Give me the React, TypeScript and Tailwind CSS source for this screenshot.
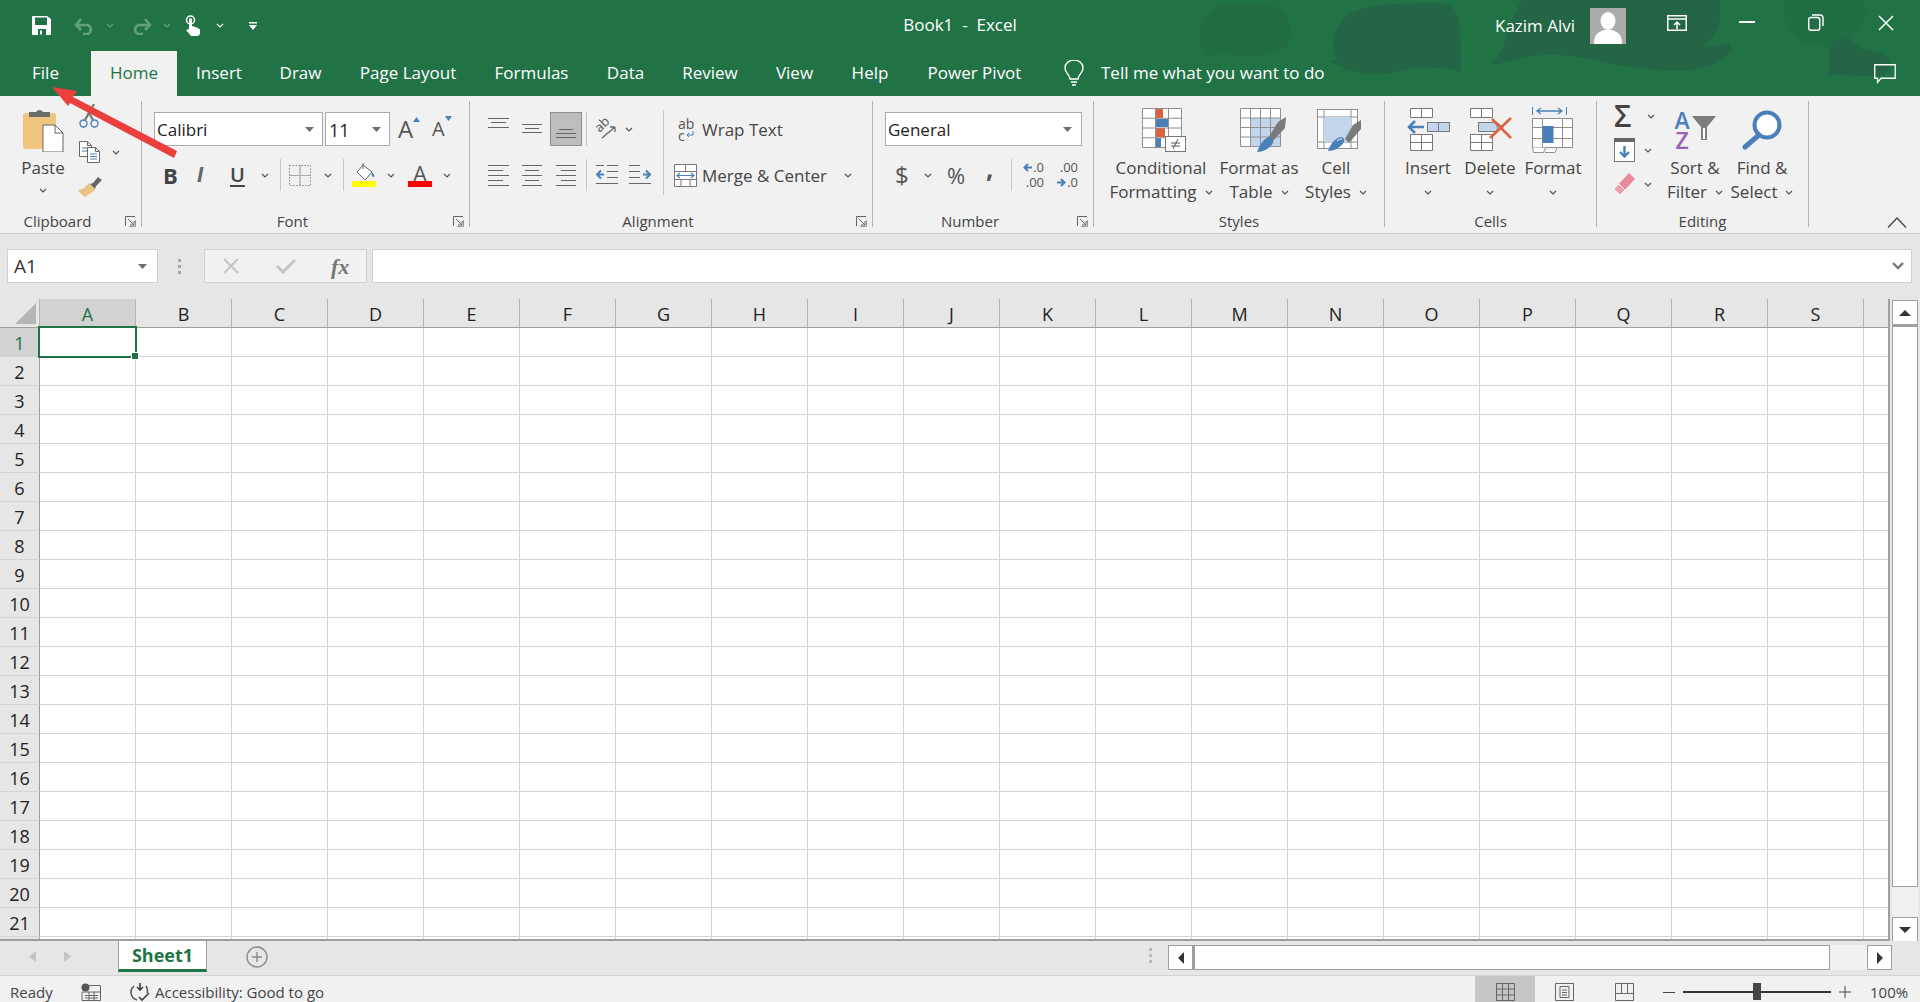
import type { ReactNode } from 'react'

const columns = 'ABCDEFGHIJKLMNOPQRS'.split('')
const rows = Array.from({ length: 22 }, (_, i) => i + 1)
const tabs = [
  { label: 'File', w: 'w-[91px]' },
  { label: 'Home', w: 'w-[86px]', active: true },
  { label: 'Insert', w: 'w-[84px]' },
  { label: 'Draw', w: 'w-[79px]' },
  { label: 'Page Layout', w: 'w-[136px]' },
  { label: 'Formulas', w: 'w-[111px]' },
  { label: 'Data', w: 'w-[77px]' },
  { label: 'Review', w: 'w-[92px]' },
  { label: 'View', w: 'w-[77px]' },
  { label: 'Help', w: 'w-[74px]' },
  { label: 'Power Pivot', w: 'w-[135px]' },
]

function Chev({ className = '', color = '#555' }: { className?: string; color?: string }) {
  return (
    <svg viewBox="0 0 8 5" className={`h-[5px] w-[8px] shrink-0 ${className}`}>
      <path d="M1 1l3 3 3-3" fill="none" stroke={color} strokeWidth="1.2" />
    </svg>
  )
}

function Caret({ className = '' }: { className?: string }) {
  return (
    <svg viewBox="0 0 9 5" className={`h-[5px] w-[9px] shrink-0 ${className}`}>
      <path d="M0 0h9L4.5 5z" fill="#6f6f6f" />
    </svg>
  )
}

function Launcher() {
  return (
    <svg viewBox="0 0 11 11" className="ml-[10px] h-[11px] w-[11px]">
      <path d="M.5 10V.5H10M3 3l6 6M9 5v4H5" fill="none" stroke="#666" strokeWidth="1" />
      <path d="M10.5 4v6.5H4" fill="none" stroke="#999" strokeWidth="1" />
    </svg>
  )
}

function Lines({ w, h, items }: { w: number; h: number; items: [number, number, number][] }) {
  return (
    <svg viewBox={`0 0 ${w} ${h}`} width={w} height={h} className="shrink-0">
      {items.map(([x1, x2, y], i) => (
        <path key={i} d={`M${x1} ${y + 0.5}H${x2}`} stroke="#666" strokeWidth="1" />
      ))}
    </svg>
  )
}

function Group({ className, label, launcher, children }: { className: string; label: string; launcher?: boolean; children: ReactNode }) {
  return (
    <div className={`flex h-[126px] shrink-0 flex-col border-r border-[#b4b4b4] ${className}`}>
      <div className="min-h-0 flex-1">{children}</div>
      <div className="mb-[-4px] flex h-[20px] items-center text-[15px] leading-[20px] text-[#444]">
        <div className="flex-1 text-center">{label}</div>
        {launcher && <div className="flex w-[26px] items-center"><Launcher /></div>}
      </div>
    </div>
  )
}

function BigButton({ className, icon, first, second }: { className: string; icon: ReactNode; first: string; second?: string }) {
  return (
    <div className={`flex shrink-0 flex-col items-center ${className}`}>
      <div className="flex h-[55px] w-full items-center justify-center pt-[2px]">{icon}</div>
      <div className="h-[24px] whitespace-nowrap leading-[24px]">{first}</div>
      <div className="flex h-[24px] items-center whitespace-nowrap leading-[24px]">
        {second}
        <Chev className={second ? 'ml-[8px]' : ''} />
      </div>
    </div>
  )
}

function PasteIcon() {
  return (
    <svg viewBox="0 0 41 45" className="h-[45px] w-[41px]">
      <rect x="0" y="6" width="33" height="36" rx="2" fill="#eec680" />
      <path d="M6 10V5h7a4 4 0 0 1 7 0h7v5z" fill="#6d6d6d" />
      <path d="M20 18h12l8 8v19H20z" fill="#fff" stroke="#666" strokeWidth="1" />
      <path d="M32 18v8h8" fill="none" stroke="#666" strokeWidth="1" />
    </svg>
  )
}

function CutIcon() {
  return (
    <svg viewBox="0 0 20 24" className="h-[24px] w-[20px]">
      <path d="M5 0l9 16M15 0L6 16" stroke="#777" strokeWidth="2.200" fill="none" />
      <circle cx="4.500" cy="19.500" r="3.500" fill="none" stroke="#4a80b9" strokeWidth="1.400" />
      <circle cx="15.500" cy="19.500" r="3.500" fill="none" stroke="#4a80b9" strokeWidth="1.400" />
    </svg>
  )
}

function CopyIcon() {
  return (
    <svg viewBox="0 0 21 22" className="h-[22px] w-[21px]">
      <path d="M.5.5h8l4 4v11H.5z" fill="#fff" stroke="#666" />
      <path d="M8.5.5v4h4" fill="none" stroke="#666" />
      <path d="M3 7h7M3 10h7" stroke="#4a80b9" />
      <path d="M8.5 6.5h8l4 4v11h-12z" fill="#fff" stroke="#666" />
      <path d="M16.5 6.5v4h4" fill="none" stroke="#666" />
      <path d="M11 13h7M11 15.500h7M11 18h7" stroke="#4a80b9" />
    </svg>
  )
}

function BrushIcon() {
  return (
    <svg viewBox="0 0 24 20" className="h-[20px] w-[24px]">
      <path d="M15 6l5-6 4 3-6 6 -1 3-5-5z" fill="#666" />
      <path d="M11 6l6 7-4 3c-2 1-4 3-6 4-2-1-5-4-7-7 4 0 8-3 11-7z" fill="#e9c384" />
    </svg>
  )
}

function CellGrid({ cols, rowsCount, x, y, w, h }: { cols: number; rowsCount: number; x: number; y: number; w: number; h: number }) {
  const v = Array.from({ length: cols + 1 }, (_, i) => x + (i * w) / cols)
  const r = Array.from({ length: rowsCount + 1 }, (_, i) => y + (i * h) / rowsCount)
  return (
    <>
      {v.map((p) => <path key={`v${p}`} d={`M${p} ${y}V${y + h}`} stroke="#8f8f8f" strokeWidth="1" />)}
      {r.map((p) => <path key={`r${p}`} d={`M${x} ${p}H${x + w}`} stroke="#8f8f8f" strokeWidth="1" />)}
    </>
  )
}

function ConditionalIcon() {
  return (
    <svg viewBox="0 0 44 44" className="ml-[5px] h-[44px] w-[44px]">
      <rect x=".5" y=".5" width="39" height="39" fill="#fff" />
      <rect x="13" y="1" width="8" height="9" fill="#dc6141" />
      <rect x="13" y="11" width="13" height="8" fill="#4a80b9" />
      <rect x="13" y="20" width="10" height="9" fill="#dc6141" />
      <rect x="13" y="30" width="6" height="9" fill="#4a80b9" />
      <CellGrid cols={3} rowsCount={4} x={0.5} y={0.5} w={39} h={39} />
      <rect x="23.500" y="28.500" width="20" height="15" fill="#fff" stroke="#777" />
      <path d="M29 35h9M29 38h9M31 41l5-10" stroke="#555" fill="none" />
    </svg>
  )
}

function TableIcon() {
  return (
    <svg viewBox="0 0 46 44" className="ml-[7px] h-[44px] w-[46px]">
      <rect x=".5" y=".5" width="40" height="38" fill="#fff" />
      <rect x="10" y="10" width="30" height="28" fill="#c3d5ea" />
      <CellGrid cols={4} rowsCount={4} x={0.5} y={0.5} w={40} h={38} />
      <path d="M38 14l8-5-1 11-13 14-4-4z" fill="#7a7a7a" />
      <path d="M17 44c2-6 6-13 12-15 3 0 5 3 4 6-3 5-9 9-16 9z" fill="#4a80b9" />
    </svg>
  )
}

function CellStyleIcon() {
  return (
    <svg viewBox="0 0 44 42" className="ml-[6px] h-[42px] w-[44px]">
      <rect x=".5" y=".5" width="40" height="39" fill="#fff" stroke="#8f8f8f" />
      <path d="M.5 8h40M.5 33h40M7 .5v39M34 .5v39" stroke="#8f8f8f" fill="none" />
      <rect x="7" y="8" width="27" height="25" fill="#c3d5ea" />
      <path d="M36 16l8-5v9L32 34l-4-4z" fill="#7a7a7a" />
      <path d="M11 42c2-6 6-12 12-14 3 0 5 2 4 5-3 5-9 9-16 9z" fill="#4a80b9" />
      <path d="M20 32c2-2 3-2 5-2" stroke="#fff" fill="none" />
    </svg>
  )
}

function InsertIcon() {
  return (
    <svg viewBox="0 0 43 43" className="h-[43px] w-[43px]">
      <path d="M3.500.5h22v9h-22zM14.500.5v9M3.500 26.500h22v16h-22zM14.500 26.500v16M3.500 34.500h22" fill="#fff" stroke="#777" />
      <rect x="20.500" y="14.500" width="22" height="9" fill="#c3d5ea" stroke="#777" />
      <path d="M31.500 14.500v9" stroke="#777" />
      <path d="M17 19H3M8 13l-6 6 6 6" fill="none" stroke="#4a80b9" strokeWidth="2.600" />
    </svg>
  )
}

function DeleteIcon() {
  return (
    <svg viewBox="0 0 43 43" className="ml-[2px] h-[43px] w-[43px]">
      <path d="M.5.5h22v9H.5zM11.500.5v9M.5 26.500h22v16H.5zM11.500 26.500v16M.5 34.500h22" fill="#fff" stroke="#777" />
      <rect x="8.500" y="14.500" width="18" height="9" fill="#c3d5ea" stroke="#777" />
      <path d="M26 13l8 6-8 6z" fill="#9bb8d8" />
      <path d="M22 11l19 19M41 10L20 30" stroke="#dc6141" strokeWidth="2.600" />
    </svg>
  )
}

function FormatIcon() {
  return (
    <svg viewBox="0 0 42 46" className="h-[46px] w-[42px]">
      <path d="M.5 0v8M34.500 0v8" stroke="#4a80b9" />
      <path d="M5 4h25M9 1L5 4l4 3M26 1l4 3-4 3" fill="none" stroke="#4a80b9" strokeWidth="1.300" />
      <rect x=".5" y="11.500" width="40" height="29" fill="#fff" stroke="#8f8f8f" />
      <path d="M.5 40.500l1 5h10l2-5M25 40.500l-2 5h-10" fill="#fff" stroke="#8f8f8f" />
      <path d="M10.500 11.500v29M30.500 11.500v29M.5 20.500h40M.5 31.500h40" stroke="#8f8f8f" fill="none" />
      <rect x="10.500" y="19" width="11" height="17" fill="#4a80b9" />
    </svg>
  )
}

function SortIcon() {
  return (
    <div className="ml-[2px] flex h-[40px] w-[43px] items-center">
      <div className="flex flex-col items-center text-[23px] font-semibold">
        <span className="h-[20px] leading-[20px] text-[#4a80b9]">A</span>
        <span className="h-[20px] leading-[20px] text-[#9a5fb7]">Z</span>
      </div>
      <svg viewBox="0 0 24 24" className="ml-[2px] mt-[-4px] h-[24px] w-[24px] shrink-0">
        <path d="M0 0h24L15 11v13H9V11z" fill="#7d7d7d" />
        <path d="M11 12h2v11h-2z" fill="#fff" />
      </svg>
    </div>
  )
}

function FindIcon() {
  return (
    <svg viewBox="0 0 41 41" className="h-[41px] w-[41px]">
      <circle cx="25" cy="16" r="12.500" fill="#fff" stroke="#4a80b9" strokeWidth="4" />
      <path d="M17 26L3 38" stroke="#4a80b9" strokeWidth="5" strokeLinecap="round" />
    </svg>
  )
}

function DecimalIcon({ more }: { more?: boolean }) {
  const arrow = (
    <svg viewBox="0 0 9 9" className="h-[9px] w-[9px]">
      {more
        ? <path d="M0 4.500h7M4 1l3.500 3.500L4 8" fill="none" stroke="#4a80b9" strokeWidth="2" />
        : <path d="M9 4.500H2M5 1L1.500 4.500 5 8" fill="none" stroke="#4a80b9" strokeWidth="2" />}
    </svg>
  )
  return (
    <div className="flex h-[30px] w-[23px] flex-col text-[13px] leading-[15px] text-[#555]">
      {more ? (
        <>
          <div className="text-right">.00</div>
          <div className="flex items-center justify-end">{arrow}<span className="ml-[1px]">.0</span></div>
        </>
      ) : (
        <>
          <div className="flex items-center justify-end">{arrow}<span className="ml-[1px]">.0</span></div>
          <div className="text-right">.00</div>
        </>
      )}
    </div>
  )
}

function Header() {
  return (
    <header className="relative h-[96px] shrink-0 bg-[#217346] text-white">
      {/* office background swirls */}
      <svg viewBox="0 0 1920 96" className="absolute inset-0 h-full w-full">
        <path d="M1199 40c0-22 12-37 34-37h28c22 0 32 20 30 34-2 12-14 17-32 18-16 1-30-1-42-2l-13 6c2-6-3-11-5-19z" fill="#226c43" />
        <path d="M1345 17c12-10 34-14 90-14 16 0 23 8 24 18 2 16 2 34 2 51l-10-3c-10 0-26-3-38-1-14 4-30 7-44 6-14-1-30-7-39-13l-4-1 11 0c-6-14-3-30 8-43z" fill="#236544" />
        <path d="M1522 0h198v20c-2 10-8 20-16 27 8 1 18-3 26-4l2 7c-8 12-30 22-57 21-24-1-46-4-70-8-22-6-40-9-62-8-14 0-30 6-51 10 6-8 12-18 14-28 2-13 10-26 16-37z" fill="#236544" />
        <path d="M1784 0h80c6 14 0 30-16 40-14 8-30 8-44 2-14-8-24-24-20-42z" fill="#226e44" />
        <path d="M1826 75c6-6 4-10 3-18-1-10 5-19 14-19 9 0 13 7 19 11 10 2 24 4 28 12 1 4-2 10-6 14-12 1-30 1-42 0-6 0-10 0-16 0z" fill="#236544" />
      </svg>
      <div className="relative flex h-[51px] items-center">
        <div className="flex w-[480px] items-center">
          <svg viewBox="0 0 19 19" className="ml-[32px] h-[19px] w-[19px]">
            <path d="M1 0h14l4 3v15a1 1 0 0 1-1 1H1a1 1 0 0 1-1-1V1a1 1 0 0 1 1-1z" fill="#fff" />
            <path d="M3 1.500h12v7.500H3zM6 13h8v6H6z" fill="#217346" />
            <path d="M8 14.500h2v4H8z" fill="#fff" />
          </svg>
          <svg viewBox="0 0 21 18" className="ml-[23px] h-[18px] w-[21px]">
            <path d="M2 8h12a5 5 0 0 1 0 9H9M7 2L2 8l5 5" fill="none" stroke="#63a07f" strokeWidth="2.500" />
          </svg>
          <Chev className="ml-[11px]" color="#63a07f" />
          <svg viewBox="0 0 21 18" className="ml-[17px] h-[18px] w-[21px]">
            <path d="M19 8H7a5 5 0 0 0 0 9h5M14 2l5 6-5 5" fill="none" stroke="#63a07f" strokeWidth="2.500" />
          </svg>
          <Chev className="ml-[11px]" color="#63a07f" />
          <svg viewBox="0 0 15 21" className="ml-[14px] h-[21px] w-[15px]">
            <circle cx="5.500" cy="5" r="4" fill="none" stroke="#fff" strokeWidth="1.500" />
            <path d="M4 3.500h3V11l5 1.500 3 2V19l-2 2H6l-5-6 3-1z" fill="#fff" />
          </svg>
          <Chev className="ml-[16px]" color="#fff" />
          <svg viewBox="0 0 8 8" className="ml-[25px] h-[8px] w-[8px]">
            <path d="M0 0h8v1.500H0zM0 3h8L4 8z" fill="#fff" />
          </svg>
        </div>
        <div className="flex-1 pb-[2px] text-center text-[17px]">Book1&nbsp; - &nbsp;Excel</div>
        <div className="flex w-[480px] items-center">
          <div className="ml-[55px] w-[95px] whitespace-nowrap text-[17px]">Kazim Alvi</div>
          <svg viewBox="0 0 36 36" className="h-[36px] w-[36px]">
            <rect width="36" height="36" fill="#ababab" />
            <ellipse cx="18" cy="13" rx="7.500" ry="9" fill="#fff" />
            <path d="M4 36c0-10 4-12 10-14h8c6 2 10 4 10 14z" fill="#fff" />
          </svg>
          <svg viewBox="0 0 20 16" className="ml-[41px] mt-[-6px] h-[16px] w-[20px]">
            <path d="M.75.75h18.500v14.500H.75zM0 4h20M10 14V7M7 10l3-3 3 3" fill="none" stroke="#fff" strokeWidth="1.500" />
          </svg>
          <div className="ml-[52px] mt-[-7px] h-[2px] w-[16px] bg-white" />
          <svg viewBox="0 0 16 17" className="ml-[53px] mt-[-6px] h-[17px] w-[16px]">
            <rect x=".75" y="3.500" width="11" height="12.750" rx="2" fill="none" stroke="#fff" strokeWidth="1.400" />
            <path d="M4 1h8a3 3 0 0 1 3 3v8" fill="none" stroke="#fff" strokeWidth="1.400" />
          </svg>
          <svg viewBox="0 0 16 16" className="ml-[54px] mt-[-6px] h-[16px] w-[16px]">
            <path d="M1 1l14 14M15 1L1 15" stroke="#fff" strokeWidth="1.500" />
          </svg>
        </div>
      </div>
      <div className="relative flex h-[45px] items-stretch text-[17px]">
        {tabs.map((t) => (
          <div key={t.label} className={`${t.w} flex items-center justify-center pb-[1px] ${t.active ? 'bg-[#f1f1f1] text-[#217346]' : ''}`}>
            {t.label}
          </div>
        ))}
        <svg viewBox="0 0 20 27" className="ml-[22px] mt-[9px] h-[27px] w-[20px]">
          <path d="M6 19c0-4-5-6-5-11a9 8 0 0 1 18 0c0 5-5 7-5 11zM7 22h6M8 25h4" fill="none" stroke="#fff" strokeWidth="1.400" />
        </svg>
        <div className="ml-[17px] flex items-center whitespace-nowrap pb-[1px]">Tell me what you want to do</div>
        <svg viewBox="0 0 22 20" className="absolute left-[1874px] top-[13px] h-[20px] w-[22px]">
          <path d="M.75.75h20.500v13.500H7L3.500 18.500v-4.250H.75z" fill="none" stroke="#fff" strokeWidth="1.300" />
        </svg>
      </div>
    </header>
  )
}

function Ribbon() {
  return (
    <section className="flex h-[138px] shrink-0 border-b border-[#d0d0d0] bg-[#f1f1f1] pt-[5px] text-[17px] text-[#444]">
      <Group className="w-[142px]" label="Clipboard" launcher>
        <div className="flex">
          <div className="ml-[15px] flex w-[56px] flex-col items-center">
            <div className="mt-[6px]"><PasteIcon /></div>
            <div className="mt-[4px] h-[24px] leading-[24px]">Paste</div>
            <Chev className="mt-[8px]" />
          </div>
          <div className="ml-[8px] flex flex-col">
            <div className="mt-[3px]"><CutIcon /></div>
            <div className="mt-[13px] flex items-center">
              <CopyIcon />
              <Chev className="ml-[12px]" />
            </div>
            <div className="mt-[14px] ml-[-1px]"><BrushIcon /></div>
          </div>
        </div>
      </Group>

      <Group className="w-[328px]" label="Font" launcher>
        <div className="ml-[12px] mt-[11px] flex h-[34px] items-center">
          <div className="flex h-[34px] w-[169px] items-center justify-between border border-[#ababab] bg-white pl-[2px] pr-[8px] text-[#222]">
            <span className="pt-[2px]">Calibri</span> <Caret />
          </div>
          <div className="ml-[2px] flex h-[34px] w-[65px] items-center justify-between border border-[#ababab] bg-white pl-[3px] pr-[8px] text-[18px] text-[#222]">
            <span className="pt-[2px]">11</span> <Caret />
          </div>
          <div className="ml-[8px] flex w-[20px] items-start">
            <span className="text-[24px] leading-[26px] text-[#555]">A</span>
            <svg viewBox="0 0 7 5" className="mt-[1px] h-[5px] w-[7px] shrink-0"><path d="M3.500 0L7 5H0z" fill="#4a80b9" /></svg>
          </div>
          <div className="ml-[14px] flex w-[20px] items-start">
            <span className="text-[20px] leading-[28px] text-[#555]">A</span>
            <svg viewBox="0 0 7 5" className="mt-[1px] h-[5px] w-[7px] shrink-0"><path d="M0 0h7L3.500 5z" fill="#4a80b9" /></svg>
          </div>
        </div>
        <div className="mt-[16px] flex h-[26px] items-center">
          <span className="ml-[21px] w-[14px] text-[22px] font-bold leading-none text-[#444]">B</span>
          <span className="ml-[20px] w-[12px] font-['Liberation_Sans',sans-serif] text-[22px] font-bold italic leading-none text-[#666]">I</span>
          <span className="ml-[21px] w-[15px] text-[20px] font-semibold leading-none text-[#444] underline underline-offset-[3px]">U</span>
          <Chev className="ml-[16px]" />
          <div className="ml-[11px] h-[32px] w-px bg-[#c6c6c6]" />
          <svg viewBox="0 0 22 21" className="ml-[8px] h-[21px] w-[22px]">
            <path d="M.5.5h21v20H.5zM11 .5v20M.5 10.500h21" fill="none" stroke="#888" strokeDasharray="1.500 1.500" />
            <path d="M11 .5v20M.5 10.500h21" stroke="#aaa" />
          </svg>
          <Chev className="ml-[13px]" />
          <div className="ml-[11px] h-[32px] w-px bg-[#c6c6c6]" />
          <svg viewBox="0 0 24 24" className="ml-[8px] h-[24px] w-[24px]">
            <path d="M11 2l9 7-7 8-8-8z" fill="#fff" stroke="#666" />
            <path d="M11 0v6" stroke="#666" />
            <path d="M20 9c2 2 3 4 2 5-2 0-3-2-2-5z" fill="#4a80b9" />
            <rect y="18" width="24" height="6" fill="#ffff00" />
          </svg>
          <Chev className="ml-[11px]" />
          <div className="ml-[13px] flex w-[24px] flex-col items-center">
            <span className="h-[17px] text-[22px] leading-[19px] text-[#555]">A</span>
            <div className="h-[6px] w-[24px] bg-[#ff0000]" />
          </div>
          <Chev className="ml-[11px]" />
        </div>
      </Group>

      <Group className="w-[403px]" label="Alignment" launcher>
        <div className="flex h-full">
          <div className="w-[193px]">
            <div className="mt-[11px] flex h-[34px] items-center">
              <div className="ml-[18px]"><Lines w={21} h={34} items={[[0, 21, 6], [3, 18, 10], [0, 21, 15]]} /></div>
              <div className="ml-[13px]"><Lines w={20} h={34} items={[[0, 20, 12], [3, 17, 16], [0, 20, 20]]} /></div>
              <div className="ml-[8px] flex h-[34px] w-[32px] shrink-0 items-center justify-center border border-[#8f8f8f] bg-[#bdbdbd]">
                <Lines w={20} h={32} items={[[3, 17, 16], [0, 20, 20], [0, 20, 24]]} />
              </div>
              <div className="ml-[4px] h-[34px] w-px shrink-0 bg-[#c6c6c6]" />
              <div className="relative ml-[9px] h-[20px] w-[20px] shrink-0">
                <span className="absolute left-[-2px] top-[-3px] -rotate-45 text-[13px] leading-[16px] text-[#555]">ab</span>
                <svg viewBox="0 0 20 20" className="absolute inset-0 h-[20px] w-[20px]">
                  <path d="M6 19L19 8M19 8v5M19 8h-5" fill="none" stroke="#666" strokeWidth="1.300" />
                </svg>
              </div>
              <Chev className="ml-[9px]" />
            </div>
            <div className="mt-[16px] flex h-[26px] items-center">
              <div className="ml-[18px]"><Lines w={21} h={21} items={[[0, 21, 0], [0, 15, 5], [0, 21, 10], [0, 15, 15], [0, 21, 20]]} /></div>
              <div className="ml-[13px]"><Lines w={20} h={21} items={[[0, 20, 0], [3, 17, 5], [0, 20, 10], [3, 17, 15], [0, 20, 20]]} /></div>
              <div className="ml-[14px]"><Lines w={20} h={21} items={[[0, 20, 0], [5, 20, 5], [0, 20, 10], [5, 20, 15], [0, 20, 20]]} /></div>
              <div className="ml-[10px] h-[32px] w-px shrink-0 bg-[#c6c6c6]" />
              <svg viewBox="0 0 22 20" className="ml-[9px] h-[20px] w-[22px]">
                <path d="M11 .5h11M11 6.500h11M11 12.500h11M0 18.500h22M0 .5h8" stroke="#666" fill="none" />
                <path d="M8 9.500H2M5 5.500l-4 4 4 4" stroke="#4a80b9" fill="none" strokeWidth="2" />
              </svg>
              <svg viewBox="0 0 22 20" className="ml-[11px] h-[20px] w-[22px]">
                <path d="M0 .5h11M0 6.500h11M0 12.500h11M0 18.500h22" stroke="#666" fill="none" />
                <path d="M14 9.500h6M17 5.500l4 4-4 4" stroke="#4a80b9" fill="none" strokeWidth="2" />
              </svg>
            </div>
          </div>
          <div className="mt-[9px] h-[85px] w-px shrink-0 bg-[#c6c6c6]" />
          <div className="flex flex-col">
            <div className="mt-[11px] flex h-[34px] items-center">
              <div className="ml-[14px] flex w-[17px] flex-col items-start text-[14px] text-[#555]">
                <span className="h-[11px] leading-[11px]">ab</span>
                <span className="mt-[1px] flex h-[11px] items-center leading-[11px]">c<svg viewBox="0 0 8 8" className="ml-[1px] h-[8px] w-[8px]"><path d="M7 0v4H1M3 2L1 4l2 2" fill="none" stroke="#4a80b9" /></svg></span>
              </div>
              <span className="ml-[7px] whitespace-nowrap pt-[2px]">Wrap Text</span>
            </div>
            <div className="mt-[16px] flex h-[26px] items-center">
              <svg viewBox="0 0 23 23" className="ml-[10px] h-[23px] w-[23px]">
                <path d="M.5.5h22v22H.5zM.5 7.500h22M.5 15.500h22M11.500.5v7M7 15.500v7M16 15.500v7" fill="#fff" stroke="#777" />
                <path d="M3 11.500h17M6 9l-3 2.500L6 14M17 9l3 2.500L17 14" fill="none" stroke="#4a80b9" strokeWidth="1.200" />
              </svg>
              <span className="ml-[5px] w-[126px] whitespace-nowrap pt-[2px]">Merge &amp; Center</span>
              <Chev className="ml-[16px]" />
            </div>
          </div>
        </div>
      </Group>

      <Group className="w-[221px]" label="Number" launcher>
        <div className="ml-[12px] mt-[11px] flex h-[34px] w-[197px] items-center justify-between border border-[#ababab] bg-white pl-[2px] pr-[9px] text-[#222]">
          <span className="pt-[2px]">General</span> <Caret />
        </div>
        <div className="mt-[16px] flex h-[26px] items-center">
          <span className="ml-[22px] w-[13px] text-[24px] leading-none text-[#555]">$</span>
          <Chev className="ml-[16px]" />
          <span className="ml-[15px] w-[20px] text-[22px] leading-none text-[#555]">%</span>
          <span className="ml-[19px] mt-[-14px] w-[10px] text-[26px] font-bold leading-none text-[#555]">,</span>
          <div className="ml-[15px] h-[32px] w-px bg-[#c6c6c6]" />
          <div className="ml-[9px]"><DecimalIcon /></div>
          <div className="ml-[11px]"><DecimalIcon more /></div>
        </div>
      </Group>

      <Group className="w-[291px]" label="Styles">
        <div className="flex pl-[11px]">
          <BigButton className="w-[112px]" icon={<ConditionalIcon />} first="Conditional" second="Formatting" />
          <BigButton className="w-[84px]" icon={<TableIcon />} first="Format as" second="Table" />
          <BigButton className="w-[70px]" icon={<CellStyleIcon />} first="Cell" second="Styles" />
        </div>
      </Group>

      <Group className="w-[212px]" label="Cells">
        <div className="flex pl-[12px]">
          <BigButton className="w-[62px]" icon={<InsertIcon />} first="Insert" />
          <BigButton className="w-[62px]" icon={<DeleteIcon />} first="Delete" />
          <BigButton className="w-[64px]" icon={<FormatIcon />} first="Format" />
        </div>
      </Group>

      <Group className="w-[212px]" label="Editing">
        <div className="flex">
          <div className="ml-[17px] flex w-[50px] flex-col">
            <div className="mt-[3px] flex h-[24px] items-center">
              <span className="w-[20px] text-[30px] font-semibold leading-[24px] text-[#444]">Σ</span>
              <Chev className="ml-[13px]" />
            </div>
            <div className="mt-[10px] flex h-[24px] items-center">
              <svg viewBox="0 0 21 24" className="h-[24px] w-[21px]">
                <rect x=".5" y=".5" width="20" height="23" fill="#fff" stroke="#777" />
                <rect width="21" height="4" fill="#666" />
                <path d="M10.500 8v10M6 14l4.500 4.500L15 14" fill="none" stroke="#4a80b9" strokeWidth="2.400" />
              </svg>
              <Chev className="ml-[9px]" />
            </div>
            <div className="mt-[10px] flex h-[24px] items-center">
              <svg viewBox="0 0 21 22" className="h-[22px] w-[21px]">
                <path d="M0 16L15 0l6 6L6 22z" fill="#e98a9b" />
                <path d="M0 16l5-5 6 6-5 5z" fill="#ee9fae" stroke="#f1f1f1" />
              </svg>
              <Chev className="ml-[9px]" />
            </div>
          </div>
          <BigButton className="w-[62px]" icon={<SortIcon />} first="Sort &" second="Filter" />
          <BigButton className="w-[72px]" icon={<FindIcon />} first="Find &" second="Select" />
        </div>
      </Group>

      <div className="flex flex-1 items-end justify-end pb-[5px] pr-[13px]">
        <svg viewBox="0 0 20 11" className="h-[11px] w-[20px]">
          <path d="M1 10.500L10 1l9 9.500" fill="none" stroke="#444" strokeWidth="1.300" />
        </svg>
      </div>
    </section>
  )
}

function FormulaBar() {
  return (
    <section className="flex h-[65px] shrink-0 items-start bg-[#e6e6e6] pt-[15px]">
      <div className="ml-[7px] flex h-[34px] w-[151px] items-center justify-between border border-[#d0d0d0] bg-white pl-[6px] pr-[10px] text-[19px] text-[#333]">
        <span className="pt-[1px]">A1</span> <Caret />
      </div>
      <div className="ml-[20px] flex h-[34px] flex-col justify-center gap-[3px]">
        <div className="h-[3px] w-[3px] bg-[#a6a6a6]" />
        <div className="h-[3px] w-[3px] bg-[#a6a6a6]" />
        <div className="h-[3px] w-[3px] bg-[#a6a6a6]" />
      </div>
      <div className="ml-[23px] flex h-[34px] w-[163px] items-center border border-[#d0d0d0] bg-[#f1f1f1]">
        <svg viewBox="0 0 16 16" className="ml-[18px] h-[16px] w-[16px]"><path d="M1 1l14 14M15 1L1 15" stroke="#c4c4c4" strokeWidth="2" /></svg>
        <svg viewBox="0 0 20 16" className="ml-[37px] h-[16px] w-[20px]"><path d="M1 8l6 6L19 2" fill="none" stroke="#c4c4c4" strokeWidth="3" /></svg>
        <span className="ml-[35px] font-['Liberation_Serif',serif] text-[22px] font-bold italic text-[#777]">fx</span>
      </div>
      <div className="ml-[5px] flex h-[34px] w-[1540px] items-center justify-end border border-[#d0d0d0] bg-white pr-[7px]">
        <svg viewBox="0 0 12 8" className="h-[8px] w-[12px]"><path d="M1 1l5 5 5-5" fill="none" stroke="#777" strokeWidth="2.400" /></svg>
      </div>
    </section>
  )
}

function Sheet() {
  return (
    <section className="flex h-[642px] shrink-0 bg-[#e6e6e6]">
      <div className="relative w-[1890px] shrink-0 overflow-hidden border-b-2 border-r-2 border-[#9f9f9f]">
        <div className="flex h-[29px] border-b border-[#9f9f9f] text-[18px] text-[#222]">
          <div className="flex w-[40px] shrink-0 items-end justify-end border-r border-[#b4b4b4] pb-[3px] pr-[3px]">
            <svg viewBox="0 0 21 21" className="h-[21px] w-[21px]"><path d="M21 0v21H0z" fill="#b5b5b5" /></svg>
          </div>
          {columns.map((c) => (
            <div
              key={c}
              className={`flex w-[96px] shrink-0 items-center justify-center border-r border-[#b4b4b4] pt-[2px] ${c === 'A' ? 'bg-[#d2d2d2] text-[#217346]' : ''}`}
            >
              {c}
            </div>
          ))}
        </div>
        {rows.map((r) => (
          <div key={r} className="flex h-[29px]">
            <div className={`flex w-[40px] shrink-0 items-center justify-center border-b border-r border-b-[#d4d4d4] border-r-[#9f9f9f] pt-[2px] text-[18px] ${r === 1 ? 'bg-[#d2d2d2] text-[#217346]' : 'text-[#222]'}`}>
              {r < 22 ? r : ''}
            </div>
            {columns.map((c) => (
              <div key={c} className="w-[96px] shrink-0 border-b border-r border-[#d4d4d4] bg-white" />
            ))}
            <div className="flex-1 border-b border-[#d4d4d4] bg-white" />
          </div>
        ))}
        <div className="absolute left-[38px] top-[27px] h-[32px] w-[99px] border-2 border-[#217346]">
          <div className="absolute bottom-[-4px] right-[-4px] h-[8px] w-[8px] border border-white bg-[#217346]" />
        </div>
      </div>
      <div className="flex flex-1 flex-col items-start pl-[2px] pt-px">
        <div className="flex h-[25px] w-[26px] shrink-0 items-center justify-center border border-[#9f9f9f] bg-white">
          <svg viewBox="0 0 12 6" className="h-[6px] w-[12px]"><path d="M6 0l6 6H0z" fill="#333" /></svg>
        </div>
        <div className="h-[562px] w-[26px] shrink-0 border border-t-2 border-[#9f9f9f] bg-white" />
        <div className="h-[30px] w-[26px] shrink-0 bg-[#f1f1f1]" />
        <div className="flex h-[25px] w-[26px] shrink-0 items-center justify-center border border-[#9f9f9f] bg-white">
          <svg viewBox="0 0 12 6" className="h-[6px] w-[12px]"><path d="M0 0h12L6 6z" fill="#333" /></svg>
        </div>
      </div>
    </section>
  )
}

function SheetTabs() {
  return (
    <section className="flex h-[34px] shrink-0 items-start bg-[#e6e6e6]">
      <div className="flex h-[30px] w-[118px] shrink-0 items-center">
        <svg viewBox="0 0 7 11" className="ml-[29px] h-[11px] w-[7px]"><path d="M7 0v11L0 5.500z" fill="#c4c4c4" /></svg>
        <svg viewBox="0 0 7 11" className="ml-[28px] h-[11px] w-[7px]"><path d="M0 0v11l7-5.500z" fill="#c4c4c4" /></svg>
      </div>
      <div className="flex h-[31px] w-[89px] shrink-0 items-center justify-center border-x border-b-[3px] border-x-[#9f9f9f] border-b-[#217346] bg-white pt-[1px] text-[18px] font-bold text-[#217346]">
        Sheet1
      </div>
      <svg viewBox="0 0 22 22" className="ml-[39px] mt-[5px] h-[22px] w-[22px]">
        <circle cx="11" cy="11" r="10" fill="none" stroke="#8a8a8a" strokeWidth="1.400" />
        <path d="M11 6v10M6 11h10" stroke="#8a8a8a" strokeWidth="1.400" />
      </svg>
      <div className="ml-[881px] mt-[7px] flex flex-col gap-[3px]">
        <div className="h-[3px] w-[3px] bg-[#bbb]" />
        <div className="h-[3px] w-[3px] bg-[#bbb]" />
        <div className="h-[3px] w-[3px] bg-[#bbb]" />
      </div>
      <div className="ml-[16px] mt-[4px] flex h-[25px] w-[25px] shrink-0 items-center justify-center border border-[#9f9f9f] bg-white">
        <svg viewBox="0 0 6 12" className="h-[12px] w-[6px]"><path d="M6 0v12L0 6z" fill="#333" /></svg>
      </div>
      <div className="mt-[4px] h-[25px] w-[637px] shrink-0 border border-l-2 border-[#9f9f9f] bg-white" />
      <div className="mt-[4px] h-[25px] w-[37px] shrink-0 bg-[#f1f1f1]" />
      <div className="mt-[4px] flex h-[25px] w-[25px] shrink-0 items-center justify-center border border-[#9f9f9f] bg-white">
        <svg viewBox="0 0 6 12" className="h-[12px] w-[6px]"><path d="M0 0v12l6-6z" fill="#333" /></svg>
      </div>
    </section>
  )
}

function StatusBar() {
  return (
    <footer className="flex h-[27px] shrink-0 border-t border-[#d4d4d4] bg-[#f1f1f1] text-[15px] text-[#444]">
      <div className="flex items-center pt-[6px]">
        <span className="ml-[10px] w-[42px]">Ready</span>
        <svg viewBox="0 0 20 18" className="ml-[29px] h-[18px] w-[20px]">
          <circle cx="4.500" cy="4.500" r="4" fill="#555" />
          <path d="M6 2.500h13.500v15H1V9M1 9h18M4 12.500h13M4 15h13M8 9v8M13 9v8" fill="none" stroke="#666" />
        </svg>
        <svg viewBox="0 0 20 19" className="ml-[29px] h-[19px] w-[20px]">
          <path d="M4 3a8 8 0 0 0 3 14M16 3a8 8 0 0 1 1 7" fill="none" stroke="#555" strokeWidth="1.500" />
          <path d="M10 0v7M7 4l3 3 3-3M9 14l3 3 7-7" fill="none" stroke="#444" strokeWidth="1.700" />
        </svg>
        <span className="ml-[5px] whitespace-nowrap">Accessibility: Good to go</span>
      </div>
      <div className="ml-auto flex h-full">
        <div className="flex h-full w-[60px] items-center justify-center bg-[#c6c6c6] pt-[6px]">
          <svg viewBox="0 0 19 18" className="h-[18px] w-[19px]">
            <path d="M.5.5h18v17H.5zM6.500.5v17M12.500.5v17M.5 6h18M.5 12h18" fill="none" stroke="#666" />
          </svg>
        </div>
        <div className="flex items-center pt-[6px]">
          <svg viewBox="0 0 19 18" className="ml-[20px] h-[18px] w-[19px]">
            <path d="M.5.5h18v17H.5z" fill="none" stroke="#666" />
            <path d="M5 3.500h9v11H5zM7 7h5M7 9.500h5M7 12h5" fill="none" stroke="#666" />
          </svg>
          <svg viewBox="0 0 19 18" className="ml-[41px] h-[18px] w-[19px]">
            <path d="M.5.5h18v17H.5zM.5 10.500h12M6.500.5v10M12.500.5v10H18" fill="none" stroke="#666" />
          </svg>
          <div className="ml-[29px] h-[1px] w-[12px] bg-[#444]" />
          <div className="relative ml-[8px] h-[2px] w-[148px] bg-[#333]">
            <div className="absolute left-[70px] top-[-8px] h-[17px] w-[8px] bg-[#444]" />
          </div>
          <svg viewBox="0 0 12 12" className="ml-[8px] h-[12px] w-[12px]"><path d="M6 0v12M0 6h12" stroke="#444" /></svg>
          <span className="ml-[19px] mr-[11px] w-[39px] whitespace-nowrap">100%</span>
        </div>
      </div>
    </footer>
  )
}

export default function App() {
  return (
    <div className="relative flex h-[1002px] w-[1920px] flex-col overflow-hidden font-['Open_Sans','Noto_Sans',sans-serif]">
      <Header />
      <Ribbon />
      <FormulaBar />
      <Sheet />
      <SheetTabs />
      <StatusBar />
      {/* red annotation arrow pointing at the File tab */}
      <svg viewBox="0 0 200 180" className="absolute left-0 top-0 h-[180px] w-[200px]">
        <path d="M52 87L77 91 73 97 177 151 174 158 70 103 68 106z" fill="#ea3f3d" />
      </svg>
    </div>
  )
}
